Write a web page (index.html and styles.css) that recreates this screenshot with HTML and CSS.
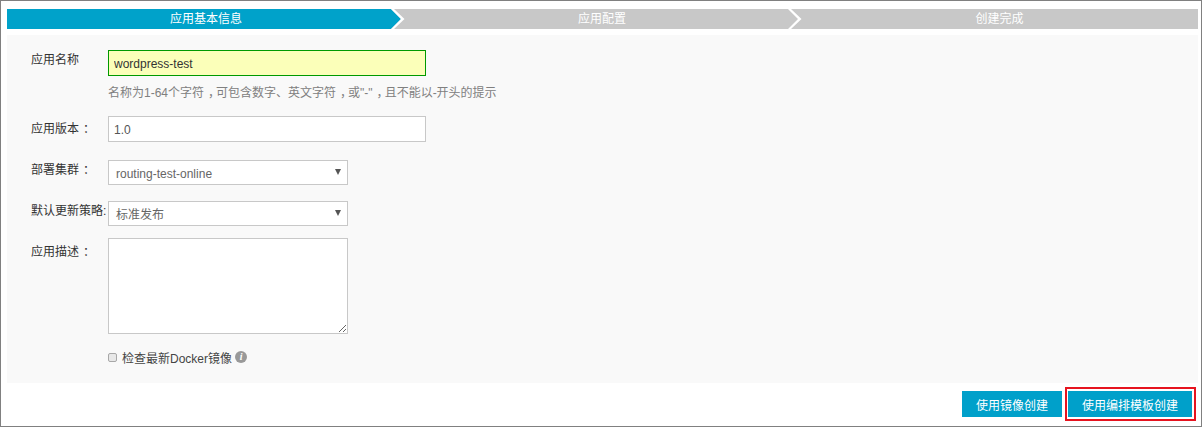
FILE: index.html
```html
<!DOCTYPE html>
<html lang="zh-CN">
<head>
<meta charset="utf-8">
<title>应用基本信息</title>
<link rel="stylesheet" href="styles.css">
</head>
<body>
<div class="frame">
  <div class="steps">
    <div class="step step-active">应用基本信息</div>
    <svg class="chevron" width="14" height="20" viewBox="0 0 14 20"><path d="M0 0 L10 10 L0 20 Z" fill="#00a2ca"/><path d="M0 0 H3 L13.5 10 L3 20 H0 L10 10 Z" fill="#fff"/></svg>
    <div class="step step-middle">应用配置</div>
    <svg class="chevron" width="14" height="20" viewBox="0 0 14 20"><path d="M0 0 H3 L13.5 10 L3 20 H0 L10 10 Z" fill="#fff"/></svg>
    <div class="step step-last">创建完成</div>
  </div>
  <form class="panel">
    <div class="row">
      <label class="label label-name">应用名称</label>
      <input class="input input-valid" type="text" value="wordpress-test">
    </div>
    <p class="hint">名称为1-64个字符<span class="fw">，</span>可包含数字、英文字符<span class="fw">，</span>或"-"<span class="fw">，</span>且不能以-开头的提示</p>
    <div class="row row-version">
      <label class="label label-version">应用版本<span class="fw">：</span></label>
      <input class="input" type="text" value="1.0">
    </div>
    <div class="row row-cluster">
      <label class="label label-name">部署集群<span class="fw">：</span></label>
      <div class="select">
        <span>routing-test-online</span>
        <svg class="caret" width="6" height="6" viewBox="0 0 6 6"><path d="M0 0 H6 L3 6 Z" fill="#555"/></svg>
      </div>
    </div>
    <div class="row row-strategy">
      <label class="label label-name label-tight">默认更新策略:</label>
      <div class="select">
        <span>标准发布</span>
        <svg class="caret" width="6" height="6" viewBox="0 0 6 6"><path d="M0 0 H6 L3 6 Z" fill="#555"/></svg>
      </div>
    </div>
    <div class="row row-desc">
      <label class="label label-desc">应用描述<span class="fw">：</span></label>
      <textarea class="textarea"></textarea>
    </div>
    <div class="check-row">
      <input class="checkbox" type="checkbox">
      <span class="check-text">检查最新Docker镜像</span>
      <span class="info">i</span>
    </div>
  </form>
  <div class="actions">
    <button class="btn btn-image" type="button">使用镜像创建</button>
    <div class="highlight">
      <button class="btn btn-template" type="button">使用编排模板创建</button>
    </div>
  </div>
</div>
</body>
</html>
```

FILE: styles.css
```css
* { box-sizing: border-box; }
html, body { margin: 0; padding: 0; background: #fff; }
body {
  width: 1202px;
  height: 427px;
  overflow: hidden;
  font-family: "Liberation Sans", "Noto Sans CJK SC", sans-serif;
  font-size: 12px;
  color: #333;
}
.frame {
  width: 1202px;
  height: 427px;
  border: 1px solid #808080;
  padding: 8px 3px 0 6px;
  display: flex;
  flex-direction: column;
}
.steps {
  display: flex;
  height: 20px;
  background: #c8c8c8;
  flex: none;
}
.step {
  text-align: center;
  line-height: 20px;
  color: #fff;
}
.step-active {
  background: #00a2ca;
  flex: none;
  width: 384px;
  padding-left: 14px;
}
.step-middle { flex: none; width: 383px; padding-left: 11px; }
.step-last { flex: 1 1 0; padding-right: 1px; }
.chevron { flex: none; display: block; }
.panel {
  background: #f9f9f9;
  margin: 6px 0 0;
  height: 348px;
  padding: 15px 0 0 24px;
  flex: none;
  display: flex;
  flex-direction: column;
}
.row { display: flex; align-items: flex-start; flex: none; }
.label { width: 77px; flex: none; line-height: 18px; color: #333; }
.label-name { padding-top: 1px; }
.label-version { padding-top: 4px; }
.label-desc { padding-top: 5px; }
.label-tight { white-space: nowrap; }
.fw { padding-left: 4px; letter-spacing: -4px; }
.input {
  width: 318px;
  height: 26px;
  border: 1px solid #c8c8c8;
  background: #fff;
  padding: 2px 5px 0;
  font: inherit;
  color: #555;
  outline: none;
}
.input-valid { border-color: #090; background: #fbffb9; color: #333; }
.hint { margin: 9px 0 0 77px; line-height: 17px; color: #808080; height: 17px; }
.row-version { margin-top: 14px; }
.row-cluster { margin-top: 18px; }
.row-strategy { margin-top: 16px; }
.row-desc { margin-top: 12px; }
.select {
  position: relative;
  width: 240px;
  height: 25px;
  border: 1px solid #c8c8c8;
  background: #fff;
  padding: 1px 0 0 7px;
  line-height: 25px;
  color: #666;
}
.caret { position: absolute; right: 6px; top: 8px; }
.textarea {
  display: block;
  width: 240px;
  height: 96px;
  border: 1px solid #c8c8c8;
  background: #fff;
  resize: both;
  margin: 0;
  padding: 4px;
  outline: none;
}
.check-row {
  display: flex;
  align-items: center;
  margin: 15px 0 0 77px;
  height: 16px;
  flex: none;
}
.checkbox {
  appearance: none;
  width: 9px;
  height: 9px;
  margin: 0 5px 0 0;
  border: 1px solid #a8a8a8;
  border-radius: 2px;
  background: #e8e8e8;
}
.check-text { color: #444; }
.info {
  width: 12px;
  height: 12px;
  margin-left: 3px;
  border-radius: 50%;
  background: #999;
  color: #fff;
  font: italic bold 10px/12px "Liberation Serif", serif;
  text-align: center;
}
.actions {
  display: flex;
  justify-content: flex-end;
  align-items: center;
  gap: 3px;
  margin-top: 4px;
  padding-right: 2px;
  flex: none;
}
.btn {
  height: 26px;
  border: 0;
  background: #00a0ca;
  color: #fff;
  font: inherit;
  padding: 0;
}
.btn-image { width: 100px; }
.btn-template { width: 124px; display: block; }
.highlight {
  border: 2px solid #e6141f;
  padding: 2px 2px 2px 1px;
  flex: none;
}
```
